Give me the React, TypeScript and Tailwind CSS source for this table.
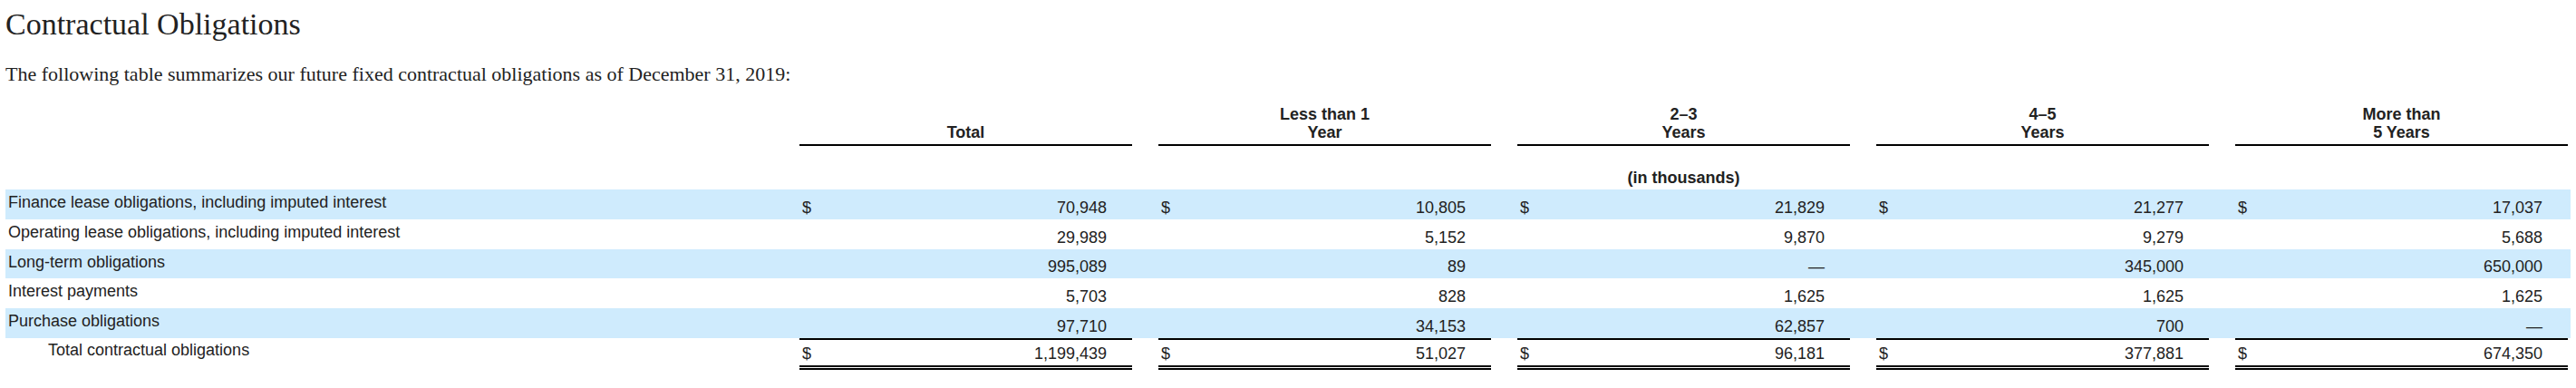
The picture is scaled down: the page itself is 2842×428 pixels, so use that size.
/* ── Contractual obligations table ── */

const columns = [
  { key: 'total', head: ['Total'] },
  { key: 'lt1', head: ['Less than 1', 'Year'] },
  { key: 'y23', head: ['2–3', 'Years'] },
  { key: 'y45', head: ['4–5', 'Years'] },
  { key: 'gt5', head: ['More than', '5 Years'] },
]

const rows = [
  {
    label: 'Finance lease obligations, including imputed interest',
    dollar: true,
    values: ['70,948', '10,805', '21,829', '21,277', '17,037'],
    shaded: true,
  },
  {
    label: 'Operating lease obligations, including imputed interest',
    dollar: false,
    values: ['29,989', '5,152', '9,870', '9,279', '5,688'],
    shaded: false,
  },
  {
    label: 'Long-term obligations',
    dollar: false,
    values: ['995,089', '89', '—', '345,000', '650,000'],
    shaded: true,
  },
  {
    label: 'Interest payments',
    dollar: false,
    values: ['5,703', '828', '1,625', '1,625', '1,625'],
    shaded: false,
  },
  {
    label: 'Purchase obligations',
    dollar: false,
    values: ['97,710', '34,153', '62,857', '700', '—'],
    shaded: true,
  },
]

const totals = ['1,199,439', '51,027', '96,181', '377,881', '674,350']

const grid = 'grid grid-cols-[847px_repeat(5,367px)] gap-x-[29px]'

function Amount({ dollar, value }: { dollar: boolean; value: string }) {
  return (
    <div className="flex h-full items-end justify-between pb-[3px] pl-[3px] pr-[28px] leading-[20px]">
      <span>{dollar ? '$' : ''}</span>
      <span>{value}</span>
    </div>
  )
}

export default function App() {
  return (
    <div className="w-[2842px] bg-white px-[6px] text-[#222] font-['Liberation_Sans',Arial,sans-serif]">
      {/* Heading */}
      <h1 className="pt-[7px] text-[34px] leading-[40px] font-['Liberation_Serif','Times_New_Roman',serif] font-normal">
        Contractual Obligations
      </h1>
      <p className="mt-[22px] text-[22px] leading-[26px] font-['Liberation_Serif','Times_New_Roman',serif]">
        The following table summarizes our future fixed contractual obligations as of December 31, 2019:
      </p>

      {/* Column headers */}
      <div className={`${grid} h-[66px] text-[18px] font-bold leading-[20px]`}>
        <div />
        {columns.map((c) => (
          <div key={c.key} className="flex flex-col items-center justify-end border-b-2 border-black pb-[3px] text-center">
            {c.head.map((line) => (
              <span key={line}>{line}</span>
            ))}
          </div>
        ))}
      </div>

      <div className={`${grid} h-[48px] text-[18px] font-bold leading-[20px]`}>
        <div />
        <div className="col-span-5 flex items-end justify-center pb-[3px]">(in thousands)</div>
      </div>

      {/* Body rows */}
      {rows.map((r) => (
        <div key={r.label} className={`${grid} h-[32.75px] text-[18px] ${r.shaded ? 'bg-[#cfebfd]' : ''}`}>
          <div className="pl-[3px] pt-[4px] leading-[20px]">{r.label}</div>
          {r.values.map((v, i) => (
            <Amount key={columns[i].key} dollar={r.dollar} value={v} />
          ))}
        </div>
      ))}

      {/* Total */}
      <div className={`${grid} h-[35px] text-[18px]`}>
        <div className="pl-[47px] pt-[3px] leading-[20px]">Total contractual obligations</div>
        {totals.map((v, i) => (
          <div key={columns[i].key} className="h-full border-t-2 border-b-[5px] border-double border-t-black border-b-black [border-top-style:solid]">
            <Amount dollar value={v} />
          </div>
        ))}
      </div>
    </div>
  )
}
